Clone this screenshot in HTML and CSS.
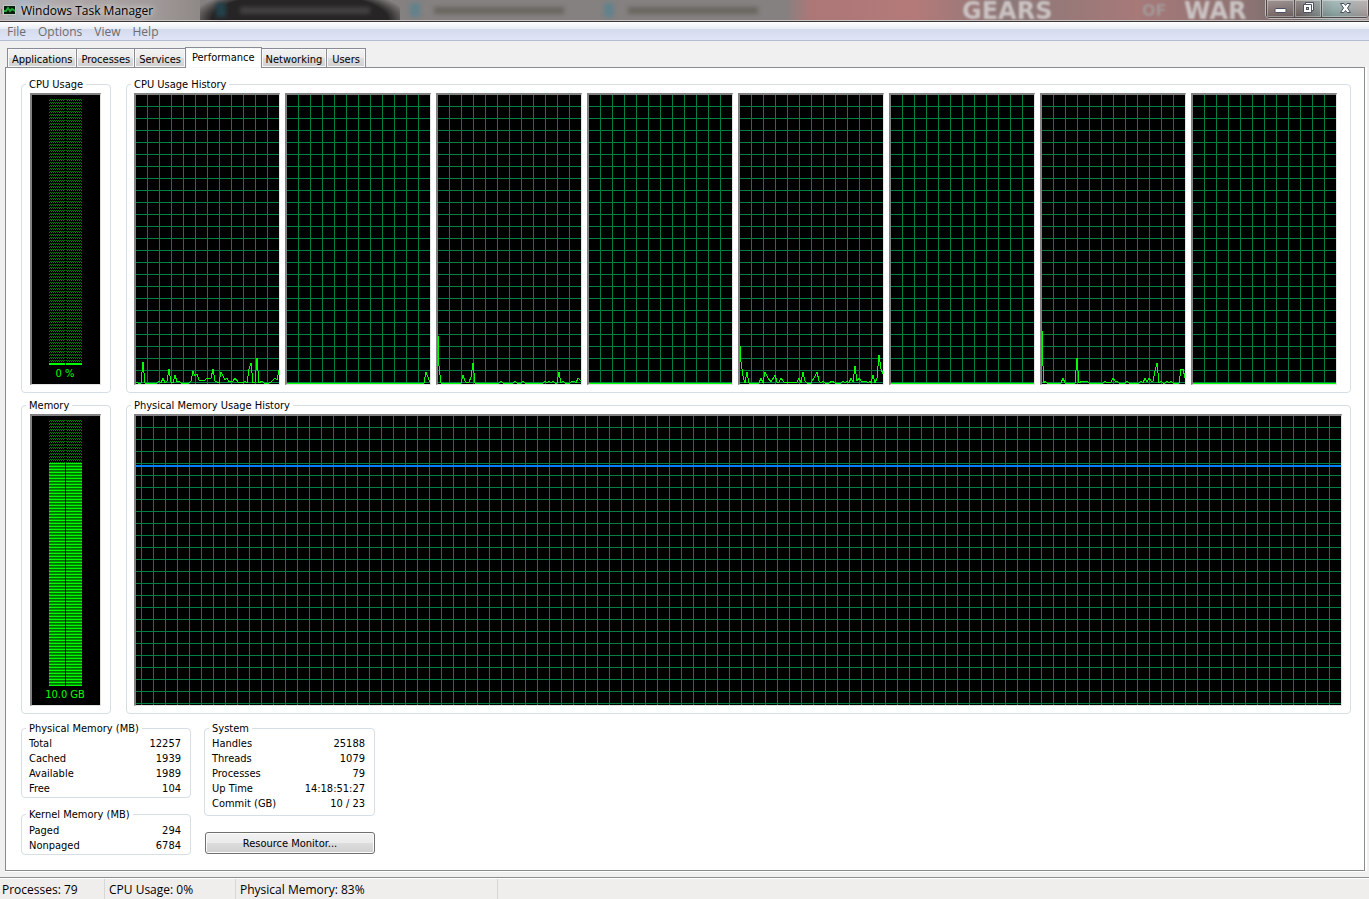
FILE: index.html
```html
<!DOCTYPE html>
<html lang="en">
<head>
<meta charset="utf-8">
<title>Windows Task Manager</title>
<link rel="stylesheet" href="styles.css">
</head>
<body>
<div class="window">
  <header class="titlebar">
    <div class="backdrop" aria-hidden="true">
      <span class="glow"></span>
      <span class="tab-shade dark"><i></i><b></b></span>
      <span class="tab-shade"><i></i><b></b></span>
      <span class="tab-shade"><i></i><b></b></span>
      <span class="wallpaper"><em class="gears">GEARS</em><small>OF</small><em class="war">WAR</em></span>
    </div>
    <svg class="app-icon" width="16" height="16" viewBox="0 0 16 16" aria-hidden="true">
      <path d="M1 6h1v5H1z" fill="#2fae4a"/>
      <rect x="3" y="2" width="13" height="10" fill="#c4c8c4"/>
      <rect x="4" y="3" width="11" height="8" fill="#0a1c10"/>
      <path d="M4 8h2l2-3 2 3 2-2 3 2" fill="none" stroke="#1fa836" stroke-width="2"/>
      <path d="M8 12h4v2H8z" fill="#a5a9aa"/><path d="M5 14h8v1H5z" fill="#b4b8b8"/>
    </svg>
    <h1 class="title">Windows Task Manager</h1>
    <div class="controls">
      <button type="button" class="min" aria-label="Minimize"><svg width="13" height="14" viewBox="0 0 13 14"><rect x="1" y="7.500" width="11" height="4" rx="1" fill="#fff" stroke="#4b5062"/></svg></button>
      <button type="button" class="max" aria-label="Restore"><svg width="13" height="14" viewBox="0 0 13 14"><path d="M3.500 1.500h8v8h-2v2h-8v-8h2z" fill="#fff" stroke="#4b5062"/><path d="M3.500 3.500h6v6" fill="none" stroke="#4b5062"/><rect x="4.500" y="6.500" width="2" height="2" fill="#c9b6b6" stroke="#4b5062"/></svg></button>
      <button type="button" class="close" aria-label="Close"><svg width="13" height="14" viewBox="0 0 13 14"><path d="M1.500 2.500h3.500l1.500 2 1.500-2h3.500l-3 4.500 3 4.500H8l-1.500-2-1.500 2H1.500l3-4.500z" fill="#fff" stroke="#4b5062"/></svg></button>
    </div>
  </header>
  <nav class="menubar">
    <button type="button">File</button><button type="button">Options</button><button type="button">View</button><button type="button">Help</button>
  </nav>
  <div class="tabs" role="tablist">
    <button type="button" role="tab">Applications</button><button type="button" role="tab">Processes</button><button type="button" role="tab">Services</button><button type="button" role="tab" class="active" aria-selected="true">Performance</button><button type="button" role="tab">Networking</button><button type="button" role="tab">Users</button>
  </div>
  <main class="panel">
    <div class="meters">
      <fieldset class="gauge-group">
        <legend>CPU Usage</legend>
        <div class="screen gauge"><div class="led"><span class="lit cpu"></span></div><span class="reading">0 %</span></div>
      </fieldset>
      <fieldset class="history">
        <legend>CPU Usage History</legend>
        <div class="cpus">
          <div class="screen chart"><svg viewBox="0 0 143 60" preserveAspectRatio="none"><polyline points="0,58 2,59 5,59 7,38 9,59 21,59 23,57 25,59 27,54 29,59 31,57 33,45 35,58 37,59 39,51 41,58 43,57 45,59 53,59 55,57 57,47 58,50 59,52 61,50 63,56 69,56 71,54 75,54 77,45 79,57 83,59 85,48 88,54 89,56 91,54 93,58 97,57 99,54 102,58 107,59 109,57 111,59 113,45 115,39 117,59 119,58 121,34 123,59 126,57 128,59 133,59 135,58 139,54 141,56 143,46"/></svg></div>
          <div class="screen chart"><svg viewBox="0 0 143 60" preserveAspectRatio="none"><polyline points="0,59 137,59 139,48 142,56 143,58"/></svg></div>
          <div class="screen chart"><svg viewBox="0 0 143 60" preserveAspectRatio="none"><polyline points="0,12 1,42 3,59 23,59 25,51 27,57 29,59 31,58 33,53 35,39 37,59 61,59 63,57 65,59 75,59 77,57 79,59 83,59 85,57 87,59 105,59 107,57 109,59 111,57 113,59 115,57 117,59 119,59 121,48 123,59 125,57 127,59 132,59 134,57 136,57 138,59 140,54 143,57"/></svg></div>
          <div class="screen chart"><svg viewBox="0 0 143 60" preserveAspectRatio="none"><polyline points="0,59 143,59"/></svg></div>
          <div class="screen chart"><svg viewBox="0 0 143 60" preserveAspectRatio="none"><polyline points="0,22 1,38 3,52 5,59 7,48 9,59 19,59 21,54 23,59 25,48 28,54 31,58 35,51 37,58 39,58 41,54 44,58 54,59 57,58 59,54 61,59 63,48 65,57 67,59 71,59 74,54 77,48 79,57 81,59 83,57 85,59 89,59 92,57 95,59 101,59 103,57 105,59 107,57 109,59 111,54 113,58 115,42 117,57 119,54 121,57 126,57 128,59 130,57 131,59 133,51 135,59 137,54 139,31 141,45 143,50"/></svg></div>
          <div class="screen chart"><svg viewBox="0 0 143 60" preserveAspectRatio="none"><polyline points="0,59 143,59"/></svg></div>
          <div class="screen chart"><svg viewBox="0 0 143 60" preserveAspectRatio="none"><polyline points="0,6 1,42 2,59 3,57 5,59 19,59 21,54 23,59 33,59 35,34 37,59 40,57 43,58 45,57 47,59 61,59 63,57 65,59 69,58 71,54 73,57 75,57 77,59 83,59 85,57 87,59 97,59 99,57 101,59 103,54 105,58 107,54 109,57 111,57 113,47 115,39 117,59 119,57 121,59 123,59 125,57 127,59 129,57 131,59 137,59 139,45 141,45 143,54"/></svg></div>
          <div class="screen chart"><svg viewBox="0 0 143 60" preserveAspectRatio="none"><polyline points="0,59 143,59"/></svg></div>
        </div>
      </fieldset>
      <fieldset class="gauge-group">
        <legend>Memory</legend>
        <div class="screen gauge"><div class="led"><span class="lit mem"></span></div><span class="reading">10.0 GB</span></div>
      </fieldset>
      <fieldset class="history">
        <legend>Physical Memory Usage History</legend>
        <div class="screen chart memory"><span class="level"></span></div>
      </fieldset>
    </div>
    <div class="stats">
      <div class="column">
        <fieldset>
          <legend>Physical Memory (MB)</legend>
          <table class="four">
            <tr><th scope="row">Total</th><td>12257</td></tr>
            <tr><th scope="row">Cached</th><td>1939</td></tr>
            <tr><th scope="row">Available</th><td>1989</td></tr>
            <tr><th scope="row">Free</th><td>104</td></tr>
          </table>
        </fieldset>
        <fieldset>
          <legend>Kernel Memory (MB)</legend>
          <table>
            <tr><th scope="row">Paged</th><td>294</td></tr>
            <tr><th scope="row">Nonpaged</th><td>6784</td></tr>
          </table>
        </fieldset>
      </div>
      <div class="column wide">
        <fieldset>
          <legend>System</legend>
          <table class="five">
            <tr><th scope="row">Handles</th><td>25188</td></tr>
            <tr><th scope="row">Threads</th><td>1079</td></tr>
            <tr><th scope="row">Processes</th><td>79</td></tr>
            <tr><th scope="row">Up Time</th><td>14:18:51:27</td></tr>
            <tr><th scope="row">Commit (GB)</th><td>10 / 23</td></tr>
          </table>
        </fieldset>
        <button type="button" class="resource">Resource Monitor...</button>
      </div>
    </div>
  </main>
  <footer class="statusbar">
    <span class="procs">Processes: 79</span><span class="usage">CPU Usage: 0%</span><span class="phys">Physical Memory: 83%</span>
  </footer>
</div>
</body>
</html>
```
FILE: styles.css
```css
* { box-sizing: border-box; }
body { margin: 0; background: #f0f0f0; }
.window {
  display: flex; flex-direction: column; height: 100vh; overflow: hidden;
  font: 11px/14px "DejaVu Sans Condensed", Tahoma, sans-serif; color: #000;
}
button { font: inherit; color: inherit; margin: 0; }

.titlebar {
  position: relative; flex: none; display: flex; align-items: flex-start; height: 22px;
  border-bottom: 1px solid #3b3637;
  background: linear-gradient(#80706f, #98908f 50%, #8c8484);
}
.backdrop { position: absolute; inset: 0; display: flex; border-bottom: 1px solid #c9c3c4; }
.glow { flex: none; width: 200px; background: linear-gradient(90deg, #b3abab, #aab3c0 12%, #b0a8a8 30%, #a29b9b 75%, #8e8886); }
.tab-shade { flex: none; display: flex; align-items: center; gap: 14px; width: 194px; padding: 4px 10px; background: #858180; }
.tab-shade i { width: 10px; height: 14px; background: #62828c; filter: blur(2px); }
.tab-shade b { width: 130px; height: 7px; background: #69655f; filter: blur(2px); }
.tab-shade.dark { width: 200px; padding-left: 16px; background: radial-gradient(110px 34px at 50% 100%, #262424 80%, #858180); }
.tab-shade.dark i { background: #23414c; }
.tab-shade.dark b { background: #444141; }
.wallpaper {
  flex: 1; display: flex; padding-left: 174px;
  background: linear-gradient(90deg, #8a807f, #ad7777 4%, #b37a79 22%, #8c7878 38%, #a77979 60%, #8b7373 80%, #706766 88%, #8ba5a5 94%, #a99a9a);
  font: bold 24px/22px "DejaVu Sans", sans-serif; color: #cbc3c3;
}
.wallpaper em, .wallpaper small { flex: none; font-style: normal; filter: blur(1px); }
.wallpaper small { width: 42px; font-size: 16px; color: #a59797; }
.gears { width: 180px; }
.app-icon { position: relative; flex: none; margin: 3px 0 0; }
.title {
  position: relative; flex: 1; margin: 3px 0 0 5px;
  font: 12px/16px "Open Sans", "Segoe UI", sans-serif;
  text-shadow: 0 0 6px #ddd, 0 0 6px #ddd;
}
.controls {
  position: relative; display: flex; height: 18px; border: 1px solid #4e4949; border-top: 0;
  border-radius: 0 0 4px 4px; box-shadow: 0 0 0 1px #c2baba;
}
.controls button {
  display: flex; align-items: flex-start; justify-content: center; padding: 1px 0 0; border: 0;
  background: linear-gradient(#ffffff40, #ffffff18 50%, #00000018);
  box-shadow: inset 0 0 0 1px #ffffff55;
}
.controls .min { width: 28px; border-right: 1px solid #565151; }
.controls .max { width: 27px; border-right: 1px solid #565151; }
.controls .close { width: 46px; }

.menubar {
  flex: none; display: flex; height: 19px; padding-left: 7px; border-bottom: 1px solid #b5bdd3;
  background: linear-gradient(#fff, #e8edf5 7px, #d4dbed 7px, #dfe5f7);
}
.menubar button {
  margin-right: 12px; padding: 0; border: 0; background: none;
  font: 12px/20px "Open Sans", "Segoe UI", sans-serif; color: #6d6d6d;
}

.tabs { flex: none; display: flex; align-items: flex-end; padding: 6px 0 0 7px; }
.tabs button {
  height: 19px; padding: 3px 4px 0; border: 1px solid #898c95; border-right-width: 0; border-bottom: 0;
  background: linear-gradient(#f2f2f2, #ebebeb 50%, #dddddd 50%, #d0d0d0);
  box-shadow: inset 0 0 0 1px #f8f8f8;
}
.tabs button:last-child, .tabs .active { border-right-width: 1px; }
.tabs .active { position: relative; height: 21px; margin-bottom: -1px; padding: 0 6px 1px; background: #fff; }
.tabs .active + button { border-left: 0; }
.tabs button:last-child { padding: 3px 5px 0; }

.panel {
  flex: 1; display: flex; flex-direction: column; gap: 7px; min-height: 0;
  margin: 0 4px 6px 5px; padding: 9px 13px 15px 15px;
  border: 1px solid #898c95; background: #fff; box-shadow: 2px 0 #fff, 0 1px #fff;
}
fieldset { margin: 0; min-width: 0; min-height: 0; padding: 2px 8px 7px; border: 1px solid #d5dfe5; border-radius: 4px; }
legend { margin-left: -3px; padding: 0 3px; height: 14px; line-height: 15px; }
.meters { flex: 1; display: grid; grid-template: minmax(0, 1fr) minmax(0, 1fr) / 90px 1fr; gap: 5px 15px; min-height: 0; }
.gauge-group, .history { display: flex; }
.gauge-group { padding-right: 9px; }
.gauge-group legend { margin-left: -4px; }
.history { padding-left: 7px; }
.screen {
  flex: 1; min-width: 0; border: solid; border-width: 2px 1px 1px 2px;
  border-color: #828282 #e3e3e3 #e3e3e3 #828282; background-color: #000;
}
.gauge { display: flex; flex-direction: column; align-items: center; padding: 4px 2px 3px 0; }
.led {
  flex: 1; position: relative; width: 33px;
  background:
    linear-gradient(#000, #000) 16px 0 / 1px 100% no-repeat,
    linear-gradient(#000 1px, #0000 1px) 0 100% / 100% 3px,
    conic-gradient(at 1px 2px, #008000 25%, #000 0 50%, #008000 0 75%, #000 0) 0 100% / 2px 3px;
}
.lit {
  position: absolute; left: 0; right: 0; bottom: 0;
  background:
    linear-gradient(#000, #000) 16px 0 / 1px 100% no-repeat,
    linear-gradient(#000 1px, #0f0 1px) 0 100% / 100% 3px;
}
.lit.cpu { height: 2px; }
.lit.mem { height: 84%; }
.reading { height: 16px; line-height: 18px; color: #0f0; }
.cpus { flex: 1; display: grid; grid-template-columns: repeat(8, 1fr); }
.cpus .screen { margin-right: 5px; }
.chart {
  display: flex; align-items: flex-end;
  background-image: linear-gradient(90deg, #0000 11px, #008040 11px), linear-gradient(#0000 11px, #008040 11px);
  background-size: 12px 12px;
}
.chart svg { display: block; width: 100%; height: 60px; shape-rendering: crispEdges; }
.chart polyline { fill: none; stroke: #0f0; stroke-width: 1; }
.memory { position: relative; background-position: right 11px top 0; }
.level { position: absolute; left: 0; right: 0; top: 17%; height: 2px; background: #0080ff; }

.stats { flex: none; display: flex; gap: 13px; }
.column { display: flex; flex-direction: column; gap: 9px; width: 170px; }
.column.wide { width: 171px; gap: 16px; }
.stats fieldset { padding: 2px 9px 1px 7px; }
.stats .wide fieldset { padding-bottom: 4px; }
.stats table { width: 100%; height: 30px; border-collapse: collapse; }
.stats .four { height: 59px; }
.stats .five { height: 74px; }
th { padding: 0; font-weight: normal; text-align: left; }
td { padding: 0; text-align: right; }
.resource {
  height: 22px; margin: 0 0 0 1px; padding: 1px 0 0; border: 1px solid #707070; border-radius: 3px;
  background: linear-gradient(#f2f2f2, #ebebeb 50%, #dddddd 50%, #cfcfcf); box-shadow: inset 0 0 0 1px #fbfbfb;
}

.statusbar {
  flex: none; display: flex; height: 22px; padding: 1px 0 0; border-top: 1px solid #8f8f8f;
  background: #f0eded; box-shadow: inset 0 1px #fff;
  font: 12px/22px "Open Sans", "Segoe UI", sans-serif;
}
.statusbar span { border-right: 1px solid #d7d7d7; padding-left: 4px; white-space: nowrap; }
.statusbar .procs { width: 105px; padding-left: 2px; }
.statusbar .usage { width: 131px; }
.statusbar .phys { width: 262px; }
```
